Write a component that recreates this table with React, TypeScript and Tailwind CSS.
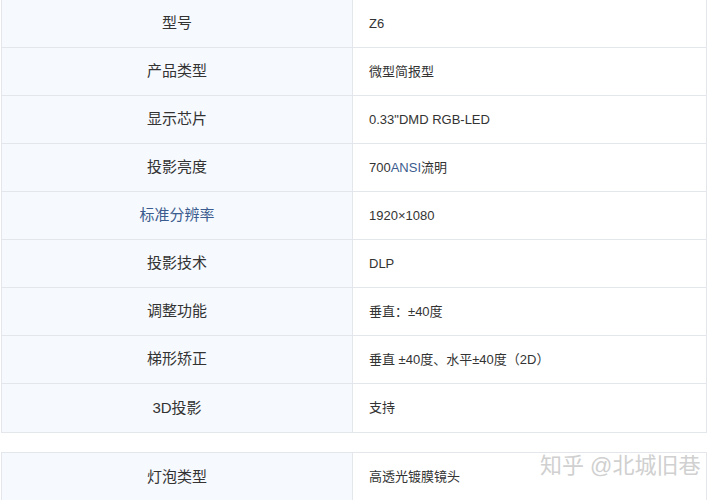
const rows: { label: string; value: React.ReactNode; labelLink?: boolean }[] = [
  { label: '型号', value: 'Z6' },
  { label: '产品类型', value: '微型简报型' },
  { label: '显示芯片', value: '0.33"DMD RGB-LED' },
  {
    label: '投影亮度',
    value: (
      <>
        700<span className="text-[#3b5c8f]">ANSI</span>流明
      </>
    ),
  },
  { label: '标准分辨率', value: '1920×1080', labelLink: true },
  { label: '投影技术', value: 'DLP' },
  { label: '调整功能', value: '垂直：±40度' },
  { label: '梯形矫正', value: '垂直 ±40度、水平±40度（2D）' },
  { label: '3D投影', value: '支持' },
]

const Row = ({ label, value, labelLink }: { label: string; value: React.ReactNode; labelLink?: boolean }) => (
  <div className="flex h-[48px] border-b border-[#e3e7ec] last:border-b-0">
    <div
      className={
        'w-[351px] shrink-0 flex items-center justify-center bg-[#f6f9fd] border-r border-[#e3e7ec] text-[15px] ' +
        (labelLink ? 'text-[#3b5c8f]' : 'text-[#333]')
      }
    >
      {label}
    </div>
    <div className="flex-1 flex items-center pl-4 text-[13px] text-[#333] bg-white">{value}</div>
  </div>
)

export default function App() {
  return (
    <div
      className="w-[711px] h-[500px] bg-white overflow-hidden relative"
      style={{ fontFamily: '"Liberation Sans", "Noto Sans CJK SC", sans-serif' }}
    >
      <div className="ml-[1px] w-[706px] border-x border-b border-[#e3e7ec]">
        {rows.map((r) => (
          <Row key={r.label} {...r} />
        ))}
      </div>
      <div className="mt-[19px] ml-[1px] w-[706px] border border-[#e3e7ec]">
        <Row label="灯泡类型" value="高透光镀膜镜头" />
      </div>
      <div className="absolute left-[540px] top-[449px] whitespace-nowrap text-[22px] text-[#d0d0d0]">
        知乎 @北城旧巷
      </div>
    </div>
  )
}
